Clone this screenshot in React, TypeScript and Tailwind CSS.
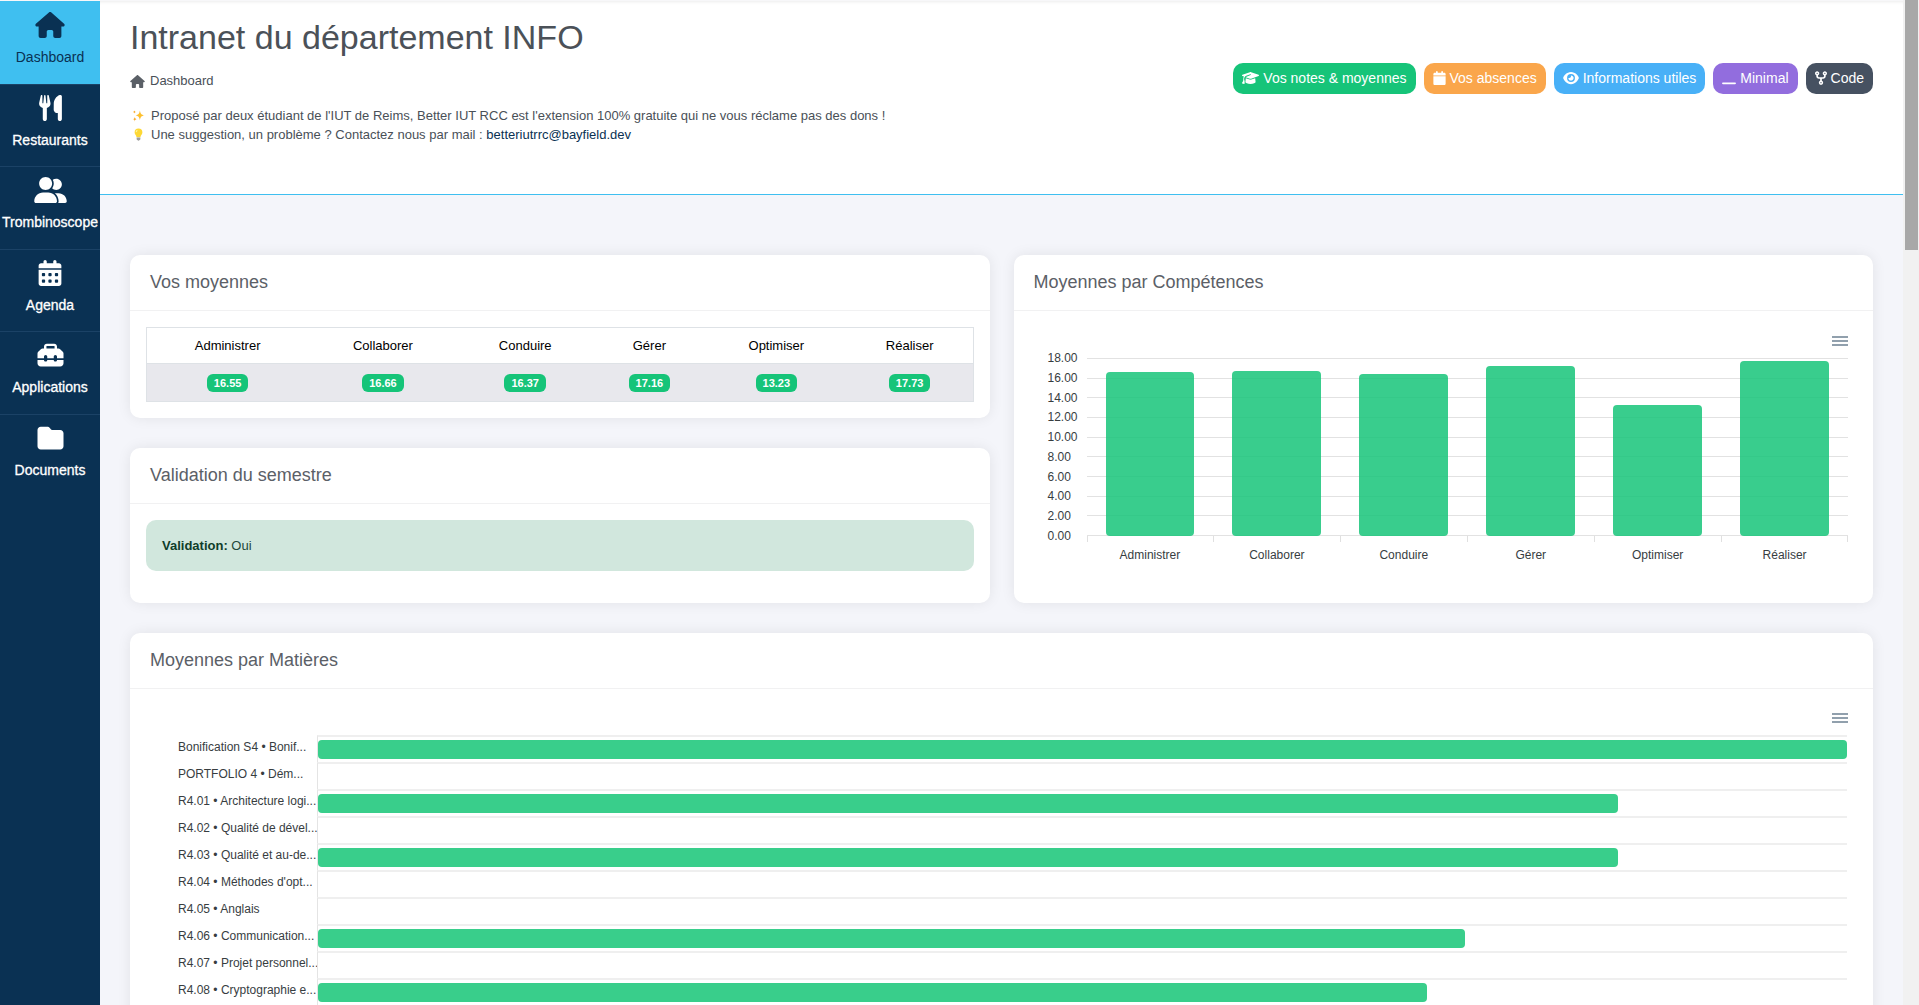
import type { ReactNode } from "react";
import {
  FaHouse,
  FaCalendarDays,
  FaToolbox,
  FaFolder,
  FaGraduationCap,
  FaCalendar,
  FaEye,
  FaWindowMinimize,
  FaCodeFork,
} from "react-icons/fa6";

function Users({ className }: { className?: string }) {
  return (
    <svg viewBox="0 0 640 512" fill="currentColor" className={className} aria-hidden="true">
      <path d="M224 256c70.700 0 128-57.310 128-128S294.700 0 224 0C153.300 0 96 57.310 96 128S153.300 256 224 256zM274.700 304H173.300C77.610 304 0 381.600 0 477.300C0 496.500 15.520 512 34.660 512h378.700C432.500 512 448 496.500 448 477.300C448 381.600 370.400 304 274.700 304z" />
      <path d="M479.100 320h-73.850C451.200 357.700 480 414.100 480 477.300C480 490.100 476.200 501.900 470 512h138C625.700 512 640 497.600 640 479.100C640 391.600 568.400 320 479.100 320zM432 256C493.900 256 544 205.900 544 144S493.900 32 432 32c-25.110 0-48.040 8.555-66.720 22.510C376.800 76.630 384 101.400 384 128c0 35.520-11.930 68.140-31.590 94.710C372.700 243.200 400.800 256 432 256z" />
    </svg>
  );
}

function Cutlery({ className }: { className?: string }) {
  return (
    <svg viewBox="0 0 448 512" fill="currentColor" className={className} aria-hidden="true">
      <path d="M221.600 148.700C224.700 161.300 224.800 174.500 222.100 187.200C219.300 199.100 213.600 211.200 205.600 221.600C191.100 238.600 173 249.100 152 254.100V472C152 482.600 147.800 492.800 140.300 500.300C132.800 507.800 122.600 512 112 512C101.400 512 91.220 507.800 83.710 500.300C76.210 492.800 72 482.600 72 472V254.100C50.960 250.100 31.960 238.900 18.300 222.400C10.190 212.200 4.529 200.300 1.755 187.500C-1.019 174.700-.8315 161.500 2.303 148.800L32.510 12.450C33.360 8.598 35.610 5.197 38.820 2.900C42.020 .602 45.970-.4297 49.890 .0026C53.820 .4302 57.460 2.303 60.100 5.259C62.740 8.214 64.180 12.040 64.160 16V160H81.530L98.620 11.910C99.020 8.635 100.600 5.621 103.100 3.434C105.500 1.248 108.700 .04 112 .04C115.300 .04 118.500 1.248 120.900 3.434C123.400 5.621 125 8.635 125.400 11.910L142.500 160H160V16C160 12.070 161.400 8.268 164 5.317C166.600 2.366 170.200 .474 174.100 .0026C178-.4262 182 .619 185.200 2.936C188.400 5.253 190.600 8.677 191.500 12.550L221.600 148.700z" />
      <path d="M448 472C448 482.600 443.800 492.800 436.300 500.300C428.800 507.800 418.600 512 408 512C397.400 512 387.200 507.800 379.700 500.300C372.200 492.800 368 482.600 368 472V352H351.200C342.800 352 334.400 350.300 326.600 347.100C318.900 343.800 311.800 339.100 305.800 333.100C299.900 327.100 295.200 320 292 312.200C288.800 304.400 287.200 296 287.200 287.600L288 173.800C288 136.900 299.100 100.800 319.800 70.280C340.500 39.710 369.800 16.050 404.100 2.339C409 .401 414.200-.3202 419.400 .2391C424.600 .7982 429.600 2.620 433.900 5.546C438.200 8.472 441.800 12.410 444.200 17.030C446.700 21.640 448 26.780 448 32V472z" />
    </svg>
  );
}

const navItems = [
  { label: "Dashboard", icon: <FaHouse className="h-[26px] w-[30px]" />, active: true },
  { label: "Restaurants", icon: <Cutlery className="h-[26px] w-[23px]" /> },
  { label: "Trombinoscope", icon: <Users className="h-[26px] w-[33px]" /> },
  { label: "Agenda", icon: <FaCalendarDays className="h-[26px] w-[24px]" /> },
  { label: "Applications", icon: <FaToolbox className="h-[26px] w-[27px]" /> },
  { label: "Documents", icon: <FaFolder className="h-[26px] w-[27px]" /> },
];

const actions = [
  { label: "Vos notes & moyennes", icon: <FaGraduationCap className="h-[14px] w-[17px]" />, color: "bg-[#16c479]" },
  { label: "Vos absences", icon: <FaCalendar className="h-[14px] w-[13px]" />, color: "bg-[#faa64b]" },
  { label: "Informations utiles", icon: <FaEye className="h-[14px] w-[16px]" />, color: "bg-[#48b0f7]" },
  { label: "Minimal", icon: <FaWindowMinimize className="h-[14px] w-[14px]" />, color: "bg-[#926dde]" },
  { label: "Code", icon: <FaCodeFork className="h-[14px] w-[12px]" />, color: "bg-[#465161]" },
];

const skills = [
  { name: "Administrer", value: 16.55 },
  { name: "Collaborer", value: 16.66 },
  { name: "Conduire", value: 16.37 },
  { name: "Gérer", value: 17.16 },
  { name: "Optimiser", value: 13.23 },
  { name: "Réaliser", value: 17.73 },
];

const scale = [18, 16, 14, 12, 10, 8, 6, 4, 2, 0];

const subjects = [
  { name: "Bonification S4 • Bonif...", value: 20 },
  { name: "PORTFOLIO 4 • Dém...", value: 0 },
  { name: "R4.01 • Architecture logi...", value: 17 },
  { name: "R4.02 • Qualité de dével...", value: 0 },
  { name: "R4.03 • Qualité et au-de...", value: 17 },
  { name: "R4.04 • Méthodes d'opt...", value: 0 },
  { name: "R4.05 • Anglais", value: 0 },
  { name: "R4.06 • Communication...", value: 15 },
  { name: "R4.07 • Projet personnel...", value: 0 },
  { name: "R4.08 • Cryptographie e...", value: 14.5 },
];

function Sparkles() {
  return (
    <svg viewBox="0 0 14 14" className="size-[13px]" aria-hidden="true">
      <path fill="#fdc02f" d="M8.500 1.500c.6 3.400 1.500 4.600 5 5.300-3.500.8-4.400 2-5 5.400-.6-3.400-1.500-4.600-4.600-5.400C7 6.100 7.900 4.900 8.500 1.500Z" />
      <path fill="#f9a825" d="M3 8.600c.3 1.500.8 2 2.300 2.300C3.800 11.200 3.300 11.800 3 13.400 2.700 11.800 2.200 11.200.7 10.900 2.200 10.600 2.700 10.100 3 8.600ZM2.600 1.400c.2 1.100.5 1.500 1.600 1.700-1.100.2-1.400.6-1.600 1.700-.2-1.100-.5-1.500-1.600-1.700 1.100-.2 1.400-.6 1.600-1.700Z" />
    </svg>
  );
}

function Bulb() {
  return (
    <svg viewBox="0 0 14 14" className="size-[13px]" aria-hidden="true">
      <path fill="#fdd835" d="M7 .5a4.200 4.200 0 0 0-4.200 4.200c0 2.300 1.800 3.100 2.100 5.300h4.200c.3-2.200 2.100-3 2.100-5.300A4.200 4.200 0 0 0 7 .5Z" />
      <path fill="#fff59d" d="M5.500 2.200a1.600 1.600 0 0 0-1.300 2.300c.4.500 1-.1 1.300-.7.4-.6.900-1.400 0-1.600Z" />
      <path fill="#9e9e9e" d="M5 10.200h4v1.600c0 .7-.5 1-.9 1.100-.2.500-.6.800-1.100.8s-.9-.3-1.100-.8c-.4-.1-.9-.4-.9-1.100Z" />
    </svg>
  );
}

function Card({ title, className = "", children }: { title: string; className?: string; children: ReactNode }) {
  return (
    <section className={`flex flex-col rounded-[10px] bg-white shadow-[0_0_14px_rgba(0,0,0,0.08)] ${className}`}>
      <h2 className="flex h-14 shrink-0 items-center border-b border-[#f1f1f2] px-5 pb-px text-[18px] leading-6 text-[#5b6067]">
        {title}
      </h2>
      {children}
    </section>
  );
}

function MenuButton() {
  return (
    <button type="button" aria-label="Menu du graphique" className="flex h-4 w-4 items-center justify-center text-[#6e8192]">
      <svg viewBox="0 0 16 12" className="h-3 w-4" aria-hidden="true">
        <path d="M0 2h16M0 6h16M0 10h16" stroke="currentColor" strokeWidth="1.500" />
      </svg>
    </button>
  );
}

function SkillsChart() {
  return (
    <div className="flex flex-col px-6 pt-4 pb-10">
      <div className="flex h-[31px] justify-end pt-[6px] pr-px">
        <MenuButton />
      </div>
      <div className="flex">
        <div className="-my-2 flex w-[49px] shrink-0 flex-col justify-between pl-[10px] text-[12px] leading-4 text-[#373d3f]">
          {scale.map((n) => (
            <span key={n}>{n.toFixed(2)}</span>
          ))}
        </div>
        <div className="mr-px grid h-[178px] flex-1">
          <div className="col-start-1 row-start-1 flex flex-col justify-between">
            {scale.map((n) => (
              <div key={n} className="h-px bg-[#e2e2e2]" />
            ))}
          </div>
          <div className="col-start-1 row-start-1 grid grid-cols-6">
            {skills.map((s) => (
              <div key={s.name} className="flex items-end justify-center">
                <div
                  className="w-[70%] rounded-[4px] bg-[#16c479]/85"
                  style={{ height: `${(s.value / 18) * 100}%` }}
                />
              </div>
            ))}
          </div>
        </div>
      </div>
      <div className="mr-px flex pl-[49px]">
        {skills.map((s) => (
          <div key={s.name} className="flex-1 text-center text-[12px] leading-4 text-[#373d3f]">
            <div className="h-[6px] border-l border-[#e0e0e0]" />
            <div className="pt-[5px]">{s.name}</div>
          </div>
        ))}
        <div className="-ml-px h-[6px] w-px bg-[#e0e0e0]" />
      </div>
    </div>
  );
}

function SubjectsChart() {
  return (
    <div className="flex flex-col px-6 pt-5 pb-10">
      <div className="flex h-[26px] justify-end pt-px pr-px">
        <MenuButton />
      </div>
      <div className="mr-[2px]">
        {subjects.map((s) => (
          <div key={s.name} className="flex h-[27px]">
            <div className="w-[163px] shrink-0 pt-1 pl-6 text-[12px] leading-4 whitespace-nowrap text-[#373d3f]">
              {s.name}
            </div>
            <div className="flex-1 border-t-2 border-l border-t-[#efefef] border-l-[#e4e4e4] pt-[3px]">
              <div className="h-[19px] rounded-[4px] bg-[#39ce8b]" style={{ width: `${(s.value / 20) * 100}%` }} />
            </div>
          </div>
        ))}
      </div>
    </div>
  );
}

export default function App() {
  return (
    <div className="flex h-screen overflow-hidden bg-[#f4f5fa] font-['Liberation_Sans',Arial,sans-serif] text-[#495057]">
      <aside className="w-[100px] shrink-0 border-t border-[#f7f7f9] bg-[#0a3153]">
        <nav className="grid h-[495px] grid-rows-6">
          {navItems.map(({ label, icon, active }) => (
            <a
              key={label}
              href="#"
              className={
                active
                  ? "flex flex-col items-center gap-[9px] bg-[#3fbff0] pt-[11px] text-[#0a3153]"
                  : "flex flex-col items-center gap-[9px] border-t border-[#1b4266] pt-[10px] text-white"
              }
            >
              {icon}
              <span
                className={active ? "text-[14px] leading-5" : "text-[14px] leading-5 [-webkit-text-stroke:0.3px]"}
              >
                {label}
              </span>
            </a>
          ))}
        </nav>
      </aside>

      <main className="min-w-0 flex-1 overflow-hidden border-t border-[#f7f7f9]">
        <header className="flex h-[194px] items-start justify-between border-b border-[#3fbff0] bg-white px-[30px] shadow-[inset_0_4px_4px_-4px_rgba(0,0,0,0.12)]">
          <div className="pt-4">
            <h1 className="text-[34px] leading-10 text-[#4b5158]">Intranet du département INFO</h1>
            <div className="mt-[14px] flex items-center gap-[5px] text-[13px] leading-5">
              <FaHouse className="h-[13px] w-[15px] text-[#5b6067]" />
              <span>Dashboard</span>
            </div>
            <div className="mt-[15px] text-[13px] leading-[19px]">
              <p className="flex items-center gap-[6px] pl-[2px]">
                <Sparkles />
                <span>
                  Proposé par deux étudiant de l'IUT de Reims, Better IUT RCC est l'extension 100% gratuite qui ne vous
                  réclame pas des dons !
                </span>
              </p>
              <p className="flex items-center gap-[6px] pl-[2px]">
                <Bulb />
                <span>
                  Une suggestion, un problème ? Contactez nous par mail :{" "}
                  <a href="mailto:betteriutrrc@bayfield.dev" className="text-[#0a3153]">
                    betteriutrrc@bayfield.dev
                  </a>
                </span>
              </p>
            </div>
          </div>
          <div className="flex gap-2 pt-[62px]">
            {actions.map(({ label, icon, color }) => (
              <button
                key={label}
                type="button"
                className={`flex h-[31px] items-center gap-1 rounded-[10px] px-[9px] pb-px text-[14px] leading-5 whitespace-nowrap text-white ${color}`}
              >
                {icon}
                <span>{label}</span>
              </button>
            ))}
          </div>
        </header>

        <div className="flex flex-col gap-[30px] px-[30px] pt-[60px] pb-[30px]">
          <div className="grid grid-cols-2 gap-6">
            <div className="flex flex-col gap-[30px]">
              <Card title="Vos moyennes">
                <div className="p-4">
                  <table className="w-full border border-[#dee2e6] text-[13px] leading-5">
                    <thead>
                      <tr className="h-9 border-b border-[#dee2e6] text-black">
                        {skills.map((s) => (
                          <th key={s.name} scope="col" className="px-2 text-center font-normal">
                            {s.name}
                          </th>
                        ))}
                      </tr>
                    </thead>
                    <tbody>
                      <tr className="h-[38px] bg-[#e8e8ed]">
                        {skills.map((s) => (
                          <td key={s.name} className="px-2 text-center">
                            <span className="inline-block rounded-md bg-[#16c479] px-[7px] align-middle text-[11px] leading-[18px] font-bold text-white">
                              {s.value.toFixed(2)}
                            </span>
                          </td>
                        ))}
                      </tr>
                    </tbody>
                  </table>
                </div>
              </Card>
              <Card title="Validation du semestre" className="flex-1">
                <div className="px-4 pt-4 pb-8">
                  <p className="rounded-[10px] bg-[#d1e7dd] p-4 text-[13px] leading-[19px] text-[#22493a]">
                    <strong className="text-[#0f3d2a]">Validation:</strong> Oui
                  </p>
                </div>
              </Card>
            </div>
            <Card title="Moyennes par Compétences">
              <SkillsChart />
            </Card>
          </div>

          <Card title="Moyennes par Matières">
            <SubjectsChart />
          </Card>
        </div>
      </main>

      <div className="flex w-4 shrink-0 justify-center bg-[#f1f1f1]" aria-hidden="true">
        <div className="h-[250px] w-[13px] bg-[#a8a8a8]" />
      </div>
    </div>
  );
}
